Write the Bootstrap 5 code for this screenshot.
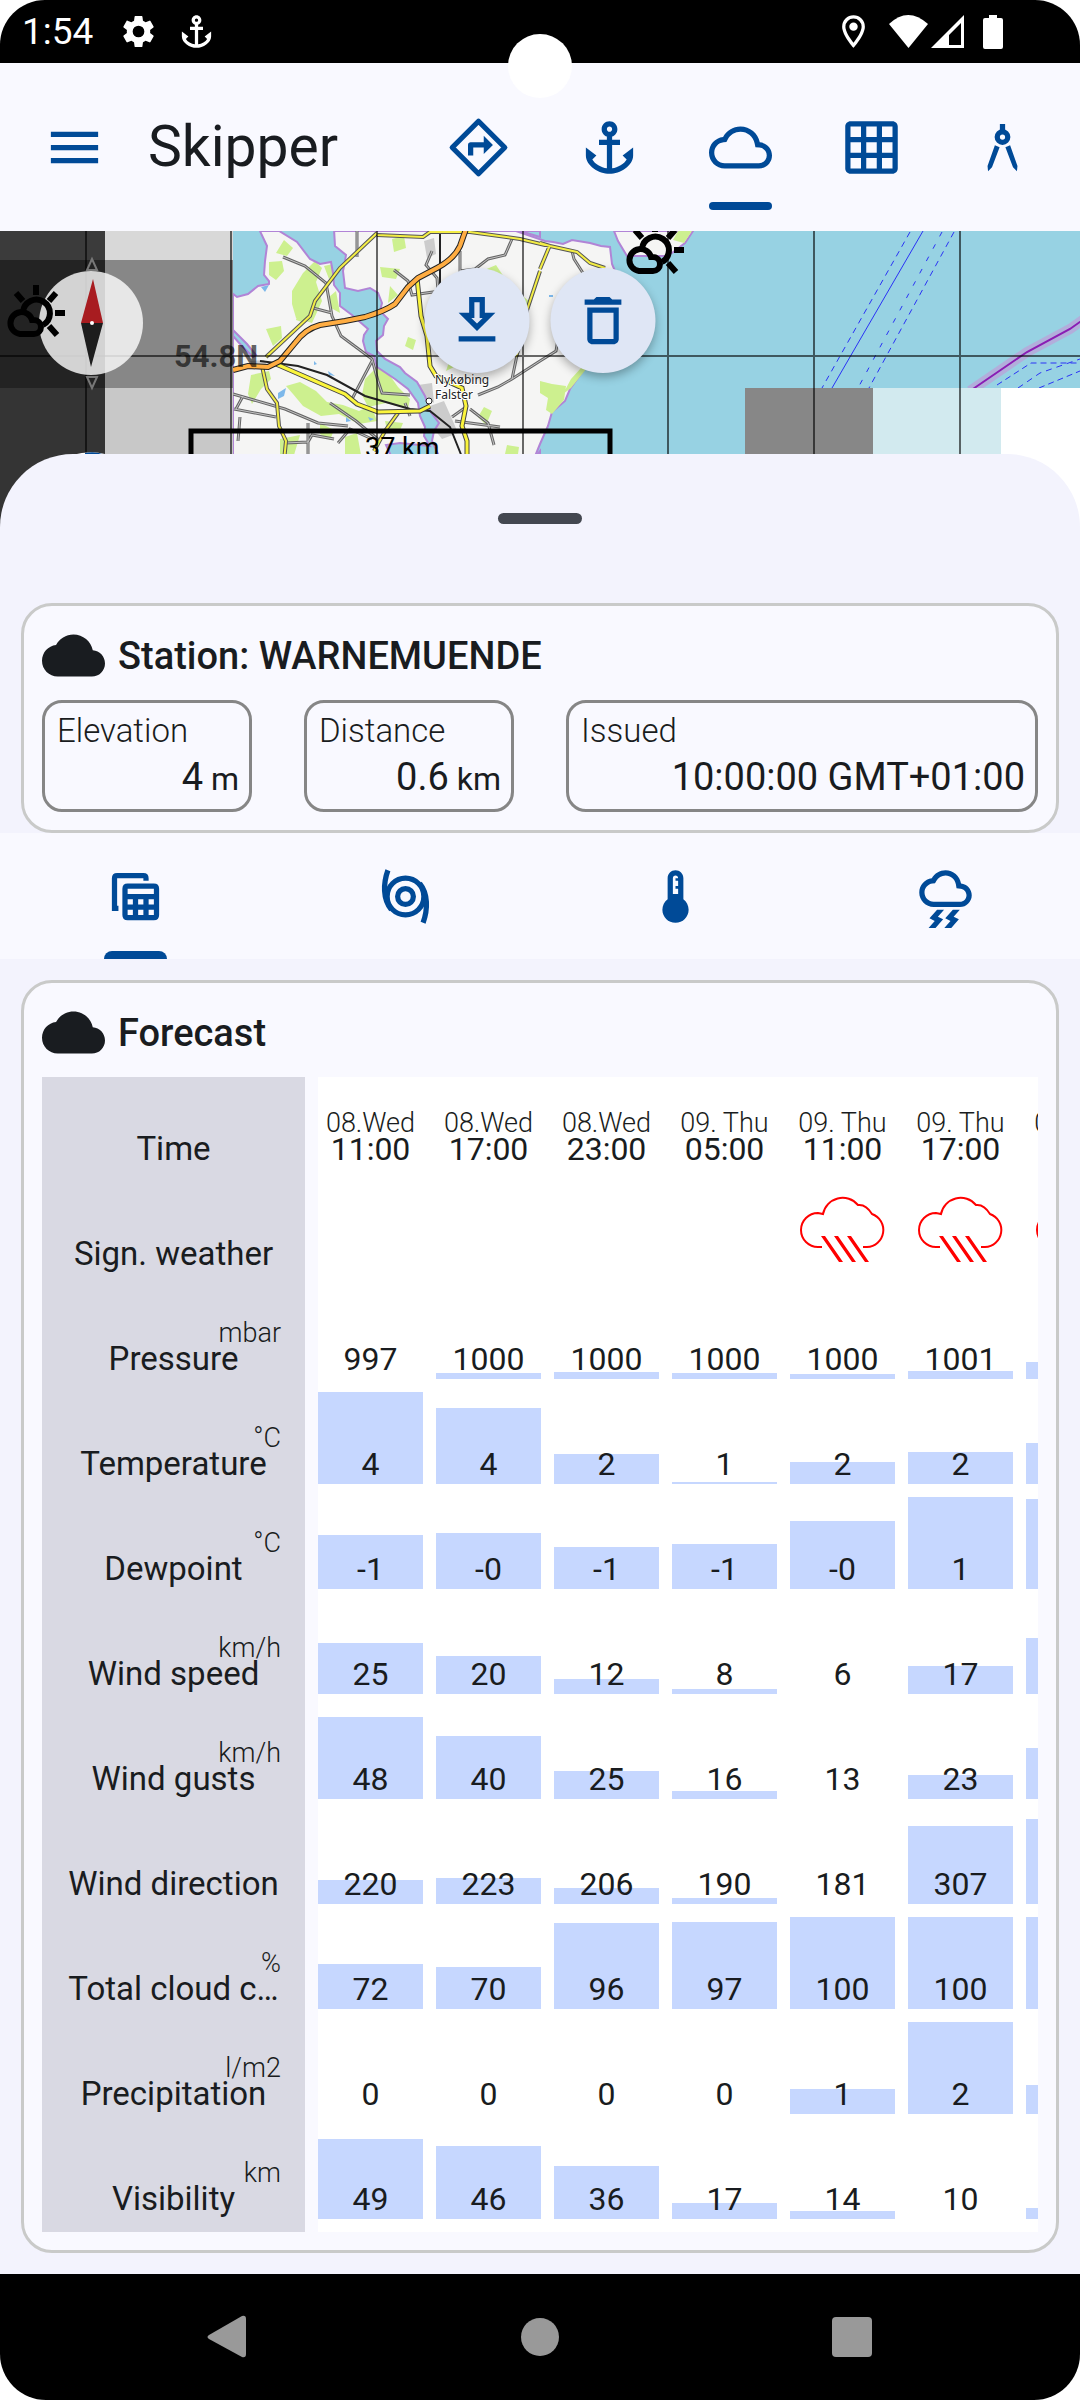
<!DOCTYPE html>
<html lang="en">
<head>
<meta charset="utf-8">
<meta name="viewport" content="width=device-width, initial-scale=1">
<title>Skipper</title>
<link rel="stylesheet" href="https://cdn.jsdelivr.net/npm/bootstrap@5.3.0/dist/css/bootstrap.min.css">
<style>
  :root { --sk-primary: #004a97; --sk-ink: #191c20; --sk-surface: #f9f9ff; --sk-sheet: #f3f3fd; --sk-bar: #c6d7ff; }
  body { font-family: Roboto, "Liberation Sans", sans-serif; color: var(--sk-ink); background: #fff; font-size: 32px; line-height: 32px; }
  svg { display: block; flex: none; }
  .ico { width: 63px; height: 63px; fill: currentColor; }
  .statusbar { height: 63px; padding: 0 69px 0 22px; background: #000; color: #fff; border-radius: 45px 45px 0 0; font-size: 37px; }
  .statusbar .ico { width: 39px; height: 39px; }
  .notices { gap: 19px; margin-left: 26px; }
  .camera { top: 34px; width: 64px; height: 64px; background: #fff; z-index: 5; }
  .appbar { height: 168px; padding: 0 12px 0 43px; background: var(--sk-surface); }
  .appbar h1 { font-size: 57px; line-height: 64px; font-weight: 400; margin-left: 42px; }
  .iconbtn { border: 0; padding: 0; background: none; color: var(--sk-primary); }
  .modetab { width: 131px; height: 168px; }
  .forecasttabs { height: 126px; background: var(--sk-surface); color: var(--sk-primary); }
  .tabmark { bottom: 0; width: 63px; height: 8px; background: var(--sk-primary); border-radius: 8px 8px 0 0; }
  .appbar .tabmark { bottom: 21px; border-radius: 4px; }
  .mapview { height: 296px; overflow: hidden; background: #97d2e3; }
  .mapview > svg { width: 100%; height: 100%; }
  .fabs { top: 37px; gap: 21px; }
  .fab { width: 105px; height: 105px; border: 0; border-radius: 50%; background: #dfe6f5; color: var(--sk-primary); box-shadow: 0 4px 10px rgba(0,0,0,.3); }
  .sheet { margin-top: -73px; border-radius: 73px 73px 0 0; background: var(--sk-sheet); padding-bottom: 21px; }
  .handle { width: 84px; height: 11px; margin: 59px auto 79px; border: 0; padding: 0; border-radius: 6px; background: #434750; }
  .panel { margin: 0 21px; padding: 18px; border: 3px solid #c9cac9; border-radius: 31px; background: var(--sk-surface); }
  .forecasttabs + .panel { margin-top: 21px; }
  .panel h2 { font-size: 38px; line-height: 44px; font-weight: 500; }
  .panelhead { gap: 13px; margin-bottom: 13px; }
  .fields { gap: 52px; }
  .field { flex: 0 0 210px; height: 112px; border: 3px solid #868686; border-radius: 20px; padding: 5px 10px 9px 12px; line-height: 46px; white-space: nowrap; }
  .field-wide { flex: 1 1 0; }
  .field dt { font-weight: 300; font-size: 33px; }
  .field dd { font-size: 38px; text-align: right; }
  .field dd span { font-size: 32px; line-height: 32px; }
  .scroller { overflow-x: auto; scrollbar-width: none; }
  .scroller::-webkit-scrollbar { display: none; }
  .forecast { table-layout: fixed; width: 1102px; border-collapse: separate; border-spacing: 0; }
  .forecast th, .forecast td { padding: 0; height: 105px; background: #fff; font-weight: 400; }
  .forecast .rowname { position: sticky; left: 0; z-index: 2; width: 276px; background: #d9d9e3; border-right: 13px solid var(--sk-surface); font-size: 33px; }
  .cellbox { display: grid; height: 105px; margin-right: 13px; text-align: center; white-space: nowrap; }
  .cellbox > * { grid-area: 1 / 1; }
  .rowname .cellbox { margin-right: 0; }
  .cellbar { align-self: end; margin-bottom: 13px; background: var(--sk-bar); }
  .celltext { align-self: end; margin-bottom: 17px; z-index: 1; }
  .celltop { display: block; font-size: 27px; line-height: 20px; font-weight: 300; }
  .rowname .celltop { text-align: right; padding-right: 24px; }
  .cellicon { margin: 12px auto 0; }
  .navbar3 { height: 126px; padding: 0 72px; background: #000; border-radius: 0 0 46px 46px; }
  .navbar3 button { color: #999; border: 0; background: none; padding: 0; flex: 1 1 0; }
</style>
</head>
<body>
<div class="position-relative">
  <div class="statusbar d-flex align-items-center justify-content-between">
    <div class="d-flex align-items-center">
      <span>1:54</span>
      <div class="notices d-flex">
      <svg class="ico" viewBox="0 0 24 24"><path d="M19.140 12.940c.04-.3.06-.61.06-.94s-.02-.64-.07-.94l2.030-1.580a.49.49 0 0 0 .12-.61l-1.920-3.320a.49.49 0 0 0-.59-.22l-2.390.96c-.5-.38-1.030-.7-1.620-.94L14.400 2.810A.48.48 0 0 0 13.920 2.400h-3.840c-.24 0-.43.17-.47.41l-.36 2.540c-.59.24-1.130.57-1.620.94l-2.390-.96c-.22-.08-.47 0-.59.22L2.740 8.870a.47.47 0 0 0 .12.61l2.030 1.580c-.05.3-.09.63-.09.94s.02.64.07.94l-2.030 1.580a.49.49 0 0 0-.12.61l1.920 3.320c.12.22.37.29.59.22l2.390-.96c.5.38 1.030.7 1.620.94l.36 2.540c.05.24.24.41.48.41h3.840c.24 0 .44-.17.47-.41l.36-2.540c.59-.24 1.130-.56 1.620-.94l2.390.96c.22.08.47 0 .59-.22l1.920-3.320a.47.47 0 0 0-.12-.61zM12 15.600A3.600 3.600 0 1 1 12 8.400a3.600 3.600 0 0 1 0 7.200z"/></svg>
      <svg class="ico" viewBox="0 0 24 24"><use href="#i-anchor"/></svg>
      </div>
    </div>
    <div class="d-flex align-items-center">
      <svg class="ico me-3" viewBox="0 0 24 24"><path d="M12 2a7 7 0 0 0-7 7c0 5.250 7 13 7 13s7-7.750 7-13a7 7 0 0 0-7-7zm0 2a5 5 0 0 1 5 5c0 2.880-2.880 7.190-5 9.880C9.920 16.210 7 11.850 7 9a5 5 0 0 1 5-5z"/><circle cx="12" cy="9" r="2.600"/></svg>
      <svg width="122" height="39" viewBox="0 0 122 39" fill="#fff"><path d="M0 12Q19 -6 39 12L19.500 36z"/><path fill-rule="evenodd" d="M42 36 75 3V36zM60 33h12V11L60 23z"/><path d="M100 3h8v3h4q2 0 2 2v27q0 2-2 2H96q-2 0-2-2V8q0-2 2-2h4z"/></svg>
    </div>
  </div>
  <div class="camera position-absolute start-50 translate-middle-x rounded-circle"></div>

  <header class="appbar d-flex align-items-center justify-content-between">
    <div class="d-flex align-items-center">
      <button class="iconbtn" type="button" aria-label="Menu"><svg class="ico" viewBox="0 0 24 24"><path d="M3 6h18v2H3zm0 5h18v2H3zm0 5h18v2H3z"/></svg></button>
      <h1 class="mb-0">Skipper</h1>
    </div>
    <nav class="d-flex">
      <button class="iconbtn modetab d-flex align-items-center justify-content-center" type="button" aria-label="Routes"><svg class="ico" viewBox="0 0 24 24"><path d="M12 2 22 12 12 22 2 12z" fill="none" stroke="currentColor" stroke-width="2" stroke-linejoin="round"/><path d="M8 15v-4c0-.55.45-1 1-1h5V7.500l3.500 3.500-3.500 3.500V12h-4v3z"/></svg></button>
      <button class="iconbtn modetab d-flex align-items-center justify-content-center" type="button" aria-label="Anchor"><svg class="ico" viewBox="0 0 24 24"><path id="i-anchor" d="M17 15l1.550 1.550c-.96 1.690-3.330 3.040-5.550 3.370V11h3V9h-3V7.820C14.160 7.400 15 6.300 15 5c0-1.650-1.350-3-3-3S9 3.350 9 5c0 1.300.84 2.400 2 2.820V9H8v2h3v8.920c-2.220-.33-4.590-1.680-5.550-3.370L7 15l-4-3v3c0 3.880 4.920 7 9 7s9-3.120 9-7v-3l-4 3zM12 4c.55 0 1 .45 1 1s-.45 1-1 1-1-.45-1-1 .45-1 1-1z"/></svg></button>
      <button class="iconbtn modetab position-relative d-flex align-items-center justify-content-center" type="button" aria-label="Weather"><svg class="ico" viewBox="0 0 24 24"><path d="M19.350 10.040C18.670 6.590 15.640 4 12 4 9.110 4 6.610 5.640 5.360 8.040 2.350 8.360 0 10.900 0 14c0 3.310 2.690 6 6 6h13c2.760 0 5-2.240 5-5 0-2.640-2.050-4.780-4.650-4.960zM19 18H6c-2.210 0-4-1.790-4-4 0-2.050 1.530-3.760 3.560-3.970l1.070-.11.5-.95C8.080 7.140 9.940 6 12 6c2.620 0 4.880 1.860 5.390 4.430l.3 1.500 1.530.11c1.560.1 2.780 1.410 2.780 2.960 0 1.650-1.350 3-3 3z"/></svg><span class="tabmark position-absolute"></span></button>
      <button class="iconbtn modetab d-flex align-items-center justify-content-center" type="button" aria-label="Grid"><svg class="ico" viewBox="0 0 24 24"><path d="M20 2H4c-1.100 0-2 .9-2 2v16c0 1.100.9 2 2 2h16c1.100 0 2-.9 2-2V4c0-1.100-.9-2-2-2zM8 20H4v-4h4v4zm0-6H4v-4h4v4zm0-6H4V4h4v4zm6 12h-4v-4h4v4zm0-6h-4v-4h4v4zm0-6h-4V4h4v4zm6 12h-4v-4h4v4zm0-6h-4v-4h4v4zm0-6h-4V4h4v4z"/></svg></button>
      <button class="iconbtn modetab d-flex align-items-center justify-content-center" type="button" aria-label="Measure"><svg class="ico" viewBox="0 0 24 24"><path d="M11 3h2v3h-2zM9.100 11.100l1.800.8-2.900 7.600-1.500 1.500-.2-2zM14.900 11.100l-1.800.8 2.900 7.600 1.500 1.500.2-2z"/><circle cx="12" cy="8" r="2" fill="none" stroke="currentColor" stroke-width="2"/></svg></button>
    </nav>
  </header>

  <main>
    <section class="mapview position-relative" aria-label="Map">
      <svg viewBox="0 0 1080 296" preserveAspectRatio="xMidYMin slice">
        <defs>
          <g id="wx" fill="none" stroke="#000" stroke-width="6">
            <path d="M23 81A13.500 13.500 0 1 1 43 94"/>
            <path d="M36 54v10M16 62l7 8M56 62l-7 8M55 82h10M49 95l8 9"/>
            <path d="M20 103h14a7 7 0 0 0 0-14h-2a11 11 0 1 0-12 14z"/>
          </g>
          <path id="yellowroads" d="M377 2 340 37 315 70 310 85 266 126M377 4 423 6 430 1 470 1 520 8 545 14M262 135 267 158 277 172 279 195 286 210 284 230M398 182 385 200 374 220M540 12 550 15 577 21 590 32 605 37M540 38 550 14M540 40 526 82M521 110 516 126"/>
          <path id="mainyellow" d="M276 133 315 150 345 163 357 173 378 181 420 180 430 175M417 47 421 85 427 105 430 135 436 145 462 157 466 175 462 195 467 210V230"/>
          <path id="orangeroad" d="M233 139 248 135 268 136 280 130 295 112Q305 98 320 94L345 90 365 86Q385 80 395 73L408 56 418 47 437 37Q454 28 460 15L466-2"/>
          <path id="minorroads" d="M357 0v26M283 26 305 35 326 52 332 85 341 105 372 128 378 150 382 162 410 164M313 77 332 82M432 20 426 34 437 47 438 60M394 39 408 50 412 64 440 60M460 20V40L475 38 488 28 505 24 512 8M233 163 285 178 318 192 348 195M234 178 276 186M243 165 236 178M240 186 238 210M285 212 308 211 312 204 334 208M308 192v32M372 130 352 168M330 172 356 190 380 210M338 212 350 198 372 208M478 164 498 156 512 148 540 130 556 120 558 108M520 110 512 148M470 178 488 192 494 214M455 190 500 196M466 176 452 186M405 172 410 185M572 20 574 28 583 42"/>
        </defs>
        <rect x="233" width="847" height="296" fill="#97d2e3"/>
        <!-- land -->
        <path d="M233 0H516L545 10 553 11 563 13 572 9 590 12 601 15 610 16 612 33 615 40 620 90 583 140 570 158 565 170 552 181 548 195 540 213 525 250V296H233z" fill="#f5f5f4" stroke="#b184d6" stroke-width="2"/>
        <path d="M614 0 618 10 627 25H665L672 22 685 12 693 0z" fill="#f5f5f4" stroke="#b184d6" stroke-width="2"/>
        <path d="M678 0H692L684 12 673 9z" fill="#cdf08f"/>
        <!-- woods -->
        <g fill="#cdf08f">
          <path d="M269 31l13-1 2 10-8 9-7-5zM292 60l11-18 12-12 7 7-6 14 6 19-10 22-16-5-4-14zM276 22l8-13 9 8-6 8zM324 35l9-2 2 9-6 6zM336 60l4 22-9-5-2-11zM266 98l15-3 1 12-9 8zM298 80l9 2-2 10-9-3zM251 144l18-4 2 8-10 10-9 15-4-10zM286 155l14-4 16 9 11 11 16 3 16 6 12-6 6 16-18 3-20-10-18 2-18-10-10-12zM365 148l16-16 17 24 12 12-2 10-22-6-18 4-6-12zM385 190l18 2-4 10-12-3zM380 36l20 2-4 10-14-2zM482 40l14-6 8 12-10 5zM392 8l12-3 2 12-12 4zM390 55l8 9-10 8zM320 192l14 7-4 10-10-6zM280 208l20-4-6 20h-14zM345 206l12-4 4 22h-16zM484 176l8 4-6 14-8-8zM507 214l12 2-2 14-14 2zM540 150l12 3 14 2-2 14-12 14-6-4 2-12-8-5zM571 148l10-11h6l-16 20-8 6zM450 128l8 6-12 6zM524 66l6 5-5 16-6-6zM408 106l8 3-3 10-8-4z"/>
        </g>
        <g fill="#ccc"><path d="M418 154l14-2 2 20-10-6zM430 175l14-5 8 18 6 14-16 6-12-15zM250 130l14-1 3 5-14 2zM424 10l10-3 2 16-9 4z"/></g>
        <g fill="#7db8ea"><path d="M278 162l8-5-2 8-6 3zM328 140l7 5-6-1zM261 56l8-2-4 7zM314 130l3 3-3 1zM368 186l6 2-4 2zM549 64h4v2h-4zM346 186l5 4-5 1z"/></g>
        <!-- water on the land -->
        <g fill="#97d2e3" stroke="#b184d6" stroke-width="2">
          <path d="M232-2H259L267 15 265 30 264 44 269 50V53L258 55 248 63 237 66 232 62z"/>
          <path d="M276-2 297 11 310 28 320 33 331 31 333 42 334 54 340 62V75L352 84 368 98 364 104 363 110 366 121 374 125 377 136 395 148 408 158 418 172 420 185 425 196 424 205 430 215 400 212 386 214 396 236H444L432 210 434 200 439 192 430 180 425 165 417 151 405 142 400 136 385 128 377 120 376 110 383 104 384 95 388 88 380 80 382 72 378 62 370 57 358 60 345 57 343 40 345 30 346 24 335 15 334-2z"/>
          <path d="M233 99l14 14 9 11-3 2-12-12-8-9z"/><path d="M520 0h20v6z"/><path d="M532 230l8-10v12z"/>
        </g>
        <!-- minor roads -->
        <use href="#minorroads" fill="none" stroke="#666" stroke-width="3"/>
        <use href="#minorroads" fill="none" stroke="#c4c4c4" stroke-width="1"/>
        <path d="M440 0V60M260 130 298 135 327 144 365 165 410 178 430 180 450 196 462 226" fill="none" stroke="#222" stroke-width="2"/>
        <!-- main roads -->
        <use href="#yellowroads" fill="none" stroke="#555" stroke-width="4"/>
        <use href="#yellowroads" fill="none" stroke="#f4ee45" stroke-width="2"/>
        <use href="#mainyellow" fill="none" stroke="#444" stroke-width="5"/>
        <use href="#mainyellow" fill="none" stroke="#fbf53c" stroke-width="3"/>
        <use href="#orangeroad" fill="none" stroke="#222" stroke-width="6"/>
        <use href="#orangeroad" fill="none" stroke="#ffad42" stroke-width="4"/>
        <!-- sea lanes -->
        <g fill="none" stroke="#2a32f5" stroke-width="1">
          <path d="M923 0 832 157"/><path d="M910 1 822 157M954 1 869 157" stroke-dasharray="6 5"/><path d="M942 1 858 157" stroke-dasharray="5 9"/>
          <path d="M997 154 1031 132H1080M1039 157 1080 140" stroke-dasharray="6 4"/><path d="M1018 157 1040 142 1080 128" stroke-dasharray="6 5"/>
        </g>
        <path d="M1084 88 1070 98 1027 121 970 160" fill="none" stroke="#c98fd6" stroke-opacity=".55" stroke-width="10"/>
        <path d="M1084 88 1070 98 1027 121 970 160" fill="none" stroke="#8a1db4" stroke-width="2"/>
        <!-- unloaded tiles -->
        <rect width="105" height="29" fill="#3b3b3b"/><rect y="29" width="105" height="128" fill="#232323"/><rect y="157" width="105" height="139" fill="#343434"/>
        <rect x="105" width="128" height="29" fill="#d8d8d8"/><rect x="105" y="29" width="128" height="128" fill="#878787"/><rect x="105" y="157" width="128" height="139" fill="#c8c8c8"/>
        <rect x="745" y="157" width="128" height="139" fill="#878787"/><rect x="873" y="157" width="128" height="139" fill="#d2eaef"/><rect x="1001" y="157" width="79" height="139" fill="#fff"/>
        <path d="M86 0V224M231 0V224M377 0V224M523 0V224M668 0V224M814 0V224M960 0V224M0 125H1080" stroke="#000" stroke-opacity=".58" stroke-width="2"/>
        <!-- compass -->
        <circle cx="91" cy="92" r="52" fill="#fff" fill-opacity=".8"/>
        <path d="M93 48 103 92H81z" fill="#a81c20"/><path d="M91 136 103 92H81z" fill="#1d1d1d"/><circle cx="92" cy="92" r="2" fill="#fff"/>
        <path d="M92 28 87 39H97zM92 157 87 146H97z" fill="none" stroke="#777" stroke-width="2"/>
        <use href="#wx"/><use href="#wx" x="619" y="-63"/>
        <path d="M72 224Q90 219 105 223V226H72z" fill="#fff"/><path d="M85 225V222Q96 220 105 224z" fill="#004a97"/>
        <path d="M191 240V200H610V240" fill="none" stroke="#000" stroke-width="5"/>
        <text x="174" y="136" font-size="31" font-weight="700" fill="#000" fill-opacity=".62">54.8N</text>
        <text x="365" y="226" font-size="27">37 km</text>
        <circle cx="429" cy="170" r="3" fill="#fff" stroke="#222"/>
        <g font-family="Noto Sans, sans-serif" font-size="12" fill="#222" stroke="#fff" stroke-width="2" paint-order="stroke"><text x="435" y="153">Nykøbing</text><text x="435" y="168">Falster</text></g>
      </svg>
      <div class="fabs position-absolute start-50 translate-middle-x d-flex">
        <button class="fab d-flex align-items-center justify-content-center" type="button" aria-label="Download"><svg class="ico" viewBox="0 0 24 24"><path d="M19 9h-4V3H9v6H5l7 7 7-7zm-8 2V5h2v6h1.170L12 13.170 9.830 11H11zm-6 7h14v2H5z"/></svg></button>
        <button class="fab d-flex align-items-center justify-content-center" type="button" aria-label="Delete"><svg class="ico" viewBox="0 0 24 24"><path d="M16 9v10H8V9h8m-1.500-6h-5l-1 1H5v2h14V4h-3.500l-1-1zM18 7H6v12c0 1.100.9 2 2 2h8c1.100 0 2-.9 2-2V7z"/></svg></button>
      </div>
    </section>

    <section class="sheet position-relative d-flex flex-column">
      <button class="handle" type="button" aria-label="Drag handle"></button>

      <article class="panel">
        <div class="panelhead d-flex align-items-center">
          <svg class="ico" viewBox="0 0 24 24"><path id="i-cloud" d="M19.350 10.040C18.670 6.590 15.640 4 12 4 9.110 4 6.600 5.640 5.350 8.040 2.340 8.360 0 10.910 0 14c0 3.310 2.690 6 6 6h13c2.760 0 5-2.240 5-5 0-2.640-2.050-4.780-4.650-4.960z"/></svg>
          <h2 class="mb-0">Station: WARNEMUENDE</h2>
        </div>
        <dl class="fields d-flex mb-0">
          <div class="field"><dt>Elevation</dt><dd class="mb-0">4<span> m</span></dd></div>
          <div class="field"><dt>Distance</dt><dd class="mb-0">0.6<span> km</span></dd></div>
          <div class="field field-wide"><dt>Issued</dt><dd class="mb-0">10:00:00 GMT+01:00</dd></div>
        </dl>
      </article>

      <nav class="forecasttabs d-flex">
        <button class="iconbtn flex-fill position-relative d-flex align-items-center justify-content-center" type="button" aria-label="Table"><svg class="ico" viewBox="0 0 24 24"><path d="M5.500 16.500H4V5q0-1 1-1h10q1 0 1 1v1" fill="none" stroke="currentColor" stroke-width="2"/><path fill-rule="evenodd" d="M9 7h10q2 0 2 2v10q0 2-2 2H9q-2 0-2-2V9q0-2 2-2zM9 9v2h10V9zM9 13v2h2v-2zM13 13v2h2v-2zM17 13v2h2v-2zM9 17v2h2v-2zM13 17v2h2v-2zM17 17v2h2v-2z"/></svg><span class="tabmark position-absolute"></span></button>
        <button class="iconbtn flex-fill d-flex align-items-center justify-content-center" type="button" aria-label="Wind"><svg class="ico" viewBox="0 0 24 24"><g fill="none" stroke="currentColor" stroke-width="2"><circle cx="12" cy="12" r="3"/><circle cx="12" cy="12" r="7"/><path d="M5.300 2C3.500 7 3.300 13 6.600 17M18.700 22C20.500 17 20.700 11 17.400 7"/></g></svg></button>
        <button class="iconbtn flex-fill d-flex align-items-center justify-content-center" type="button" aria-label="Temperature"><svg class="ico" viewBox="0 0 24 24"><path d="M15 13V5c0-1.660-1.340-3-3-3S9 3.340 9 5v8c-1.210.91-2 2.370-2 4 0 2.760 2.240 5 5 5s5-2.240 5-5c0-1.630-.79-3.090-2-4zm-4-8c0-.55.45-1 1-1s1 .45 1 1h-1v1h1v2h-1v1h1v2h-2V5z"/></svg></button>
        <button class="iconbtn flex-fill d-flex align-items-center justify-content-center" type="button" aria-label="Storm"><svg class="ico" viewBox="0 0 24 24"><path d="M17.920 7.020C17.450 4.180 14.970 2 12 2 9.820 2 7.830 3.180 6.780 5.060 4.090 5.410 2 7.740 2 10.500 2 13.530 4.470 16 7.500 16h10c2.480 0 4.500-2.020 4.500-4.500 0-2.340-1.790-4.270-4.080-4.480zM17.500 14h-10C5.570 14 4 12.430 4 10.500c0-1.740 1.310-3.210 3.040-3.420l.97-.13.48-.84C9.190 4.810 10.540 4 12 4c1.940 0 3.630 1.440 3.950 3.350l.25 1.520 1.540.14C19.040 9.130 20 10.220 20 11.500c0 1.380-1.120 2.500-2.500 2.500z"/><path d="M14.800 17l-2.900 3.320 2 1L11.550 24h2.650l2.900-3.320-2-1L17.450 17zm-6 0l-2.900 3.320 2 1L5.550 24H8.200l2.900-3.320-2-1L11.450 17z"/></svg></button>
      </nav>

      <article class="panel">
        <div class="panelhead d-flex align-items-center">
          <svg class="ico" viewBox="0 0 24 24"><use href="#i-cloud"/></svg>
          <h2 class="mb-0">Forecast</h2>
        </div>
        <div class="scroller">
          <table class="forecast">
            <thead><tr id="times"></tr></thead>
            <tbody id="rows"></tbody>
          </table>
        </div>
      </article>
    </section>
  </main>

  <nav class="navbar3 d-flex align-items-center">
    <button type="button" aria-label="Back"><svg class="mx-auto" width="44" height="44" viewBox="0 0 44 44" fill="currentColor"><path d="M3 20 36 1Q40 0 40 4V39Q40 43 36 42L3 24Q0 22 3 20z"/></svg></button>
    <button type="button" aria-label="Home"><svg class="mx-auto" width="40" height="40" viewBox="0 0 40 40" fill="currentColor"><circle cx="20" cy="20" r="19"/></svg></button>
    <button type="button" aria-label="Recents"><svg class="mx-auto" width="40" height="40" viewBox="0 0 40 40" fill="currentColor"><rect width="40" height="40" rx="4"/></svg></button>
  </nav>
</div>

<script src="https://cdn.jsdelivr.net/npm/bootstrap@5.3.0/dist/js/bootstrap.bundle.min.js"></script>
<script>
  const times = [['08.Wed','11:00'],['08.Wed','17:00'],['08.Wed','23:00'],['09. Thu','05:00'],['09. Thu','11:00'],['09. Thu','17:00'],['09. Thu','23:00']];
  // name, unit, values, bar heights in pixels (92 is the full bar)
  const rows = [
    ['Pressure','mbar',[997,1000,1000,1000,1000,1001],[0,6,7,6,5,8,17]],
    ['Temperature','°C',[4,4,2,1,2,2],[92,76,30,2,22,32,41]],
    ['Dewpoint','°C',['-1','-0','-1','-1','-0',1],[54,56,42,45,68,92,90]],
    ['Wind speed','km/h',[25,20,12,8,6,17],[51,38,15,5,0,28,56]],
    ['Wind gusts','km/h',[48,40,25,16,13,23],[82,63,28,8,0,24,51]],
    ['Wind direction','',[220,223,206,190,181,307],[24,26,16,6,0,78,85]],
    ['Total cloud c…','%',[72,70,96,97,100,100],[45,42,86,87,92,92,92]],
    ['Precipitation','l/m2',[0,0,0,0,1,2],[0,0,0,0,25,92,29]],
    ['Visibility','km',[49,46,36,17,14,10],[80,73,53,16,8,0,11]]
  ];
  const rain = '<svg class="cellicon" width="86" height="70" viewBox="0 0 86 70" fill="none" stroke="#f00" stroke-width="2"><path d="M22 53H18A17 17 0 0 1 18 19L23 20A20 20 0 0 1 58 11Q66 10 72 20A17 17 0 0 1 67 53H63"/><path d="M21 42h4L43 68H39zM34 42h4L56 68H52zM47 42h4L69 68H65z" fill="#f00" stroke="none"/></svg>';
  const box = inner => '<div class="cellbox">' + inner + '</div>';
  const text = (top, main) => '<div class="celltext">' + (top ? '<span class="celltop">' + top + '</span>' : '') + main + '</div>';
  const name = (label, unit) => '<th class="rowname" scope="row">' + box(text(unit, label)) + '</th>';
  document.getElementById('times').innerHTML = name('Time', '') + times.map(t => '<th scope="col">' + box(text(t[0], t[1])) + '</th>').join('');
  document.getElementById('rows').innerHTML =
    '<tr>' + name('Sign. weather', '') + times.map((t, i) => '<td>' + box(i > 3 ? rain : '') + '</td>').join('') + '</tr>' +
    rows.map(r => '<tr>' + name(r[0], r[1]) + r[3].map((h, i) =>
      '<td>' + box('<div class="cellbar" style="height:' + h + 'px"></div>' + (i < 6 ? text('', r[2][i]) : '')) + '</td>').join('') + '</tr>').join('');
</script>
</body>
</html>
